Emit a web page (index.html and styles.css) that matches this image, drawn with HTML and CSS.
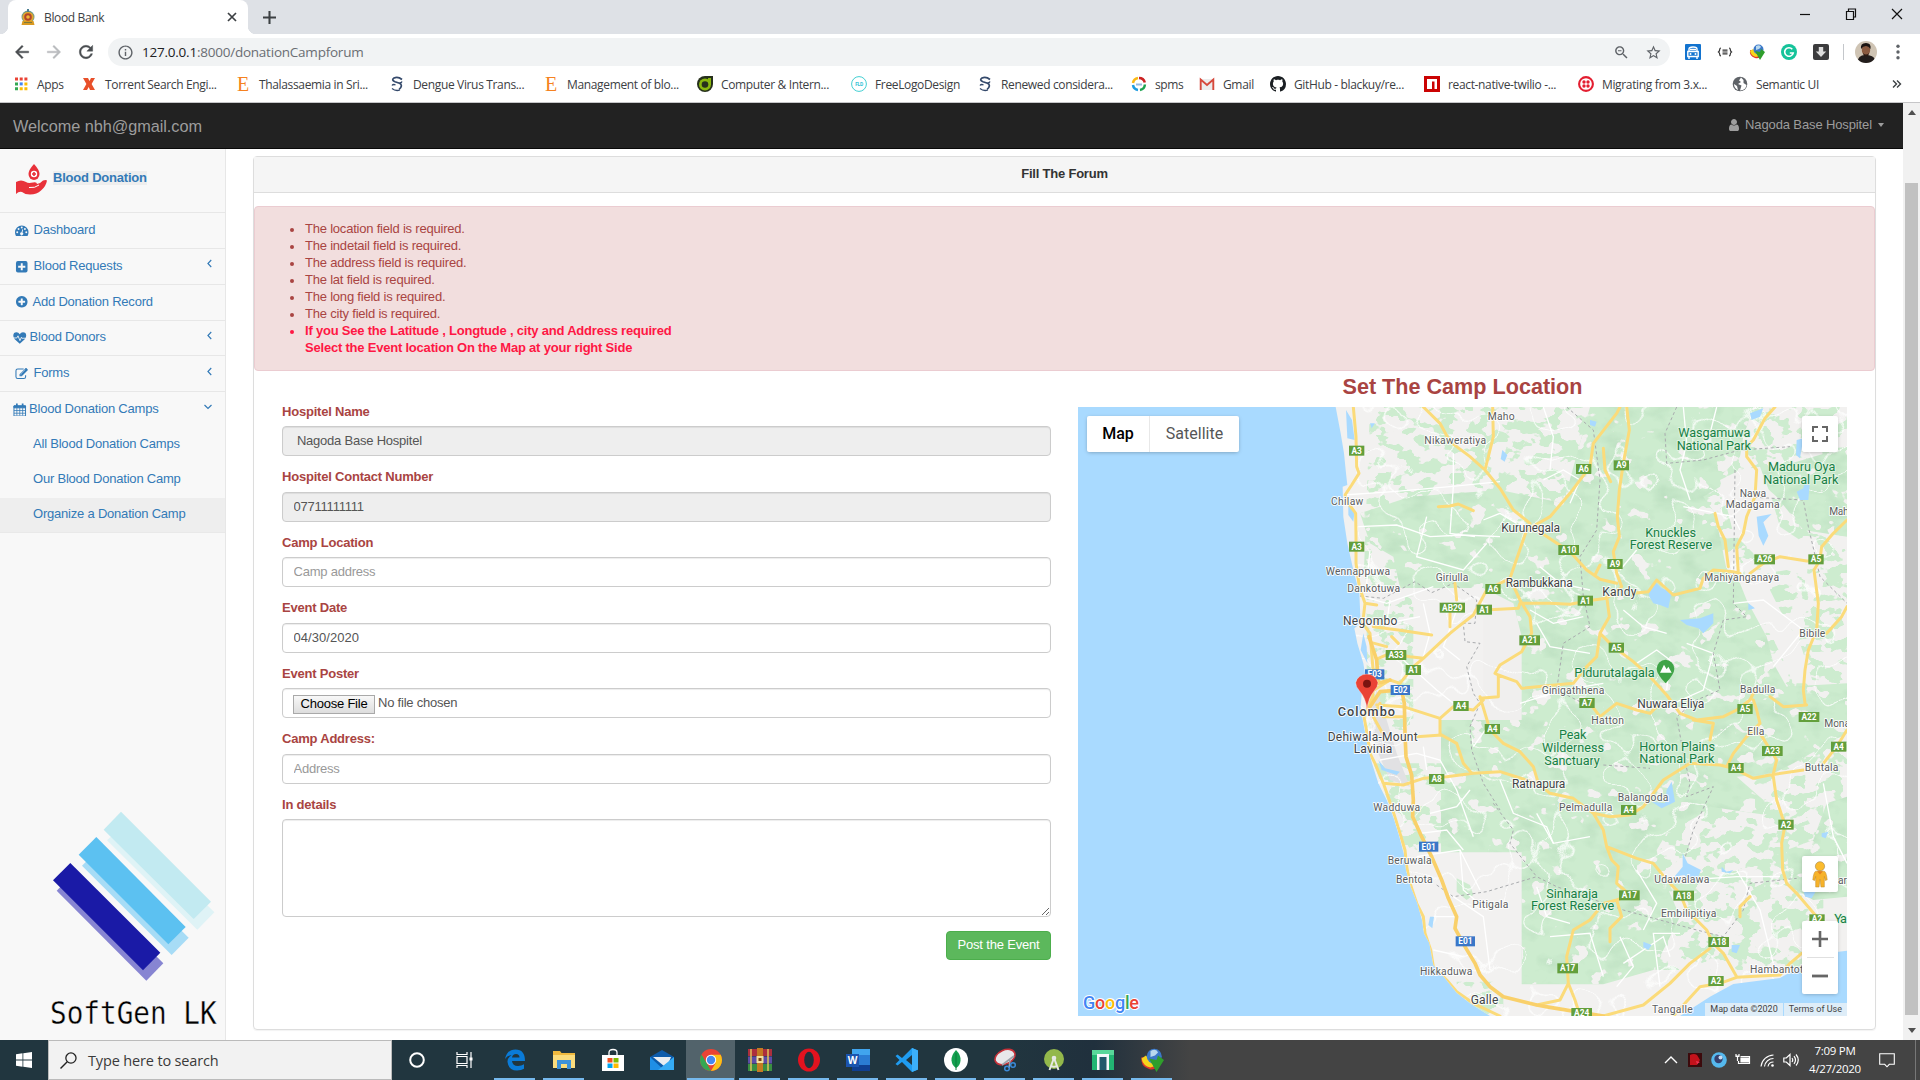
FILE: index.html
```html
<!DOCTYPE html>
<html lang="en">
<head>
<meta charset="utf-8">
<title>Blood Bank</title>
<link rel="stylesheet" href="styles.css">
</head>
<body>

<header class="tabstrip">
  <div class="tab">
    <svg class="i16" viewBox="0 0 16 16"><circle cx="8" cy="8" r="6.500" fill="#6f9a8d"/><circle cx="8" cy="8.300" r="5.600" fill="#e2a72e"/><circle cx="8" cy="8" r="3.800" fill="#b3462b"/><circle cx="8" cy="8" r="1.800" fill="#f0b638"/><path d="M7 0h2v3H7z" fill="#4c7f93"/><path d="M2.500 12h11l1 4h-13z" fill="#d99a22"/><path d="M4 13.500h8" stroke="#7d7a3a"/></svg>
    <span class="tab-title">Blood Bank</span>
    <svg class="tab-close" viewBox="0 0 10 10"><path d="M1 1l8 8M9 1l-8 8" stroke="#3c4043" stroke-width="1.700"/></svg>
  </div>
  <svg class="newtab" viewBox="0 0 12 12"><path d="M6 0v12M0 6h12" stroke="#3c4043" stroke-width="1.900"/></svg>
  <div class="winbtns">
    <svg viewBox="0 0 12 12"><path d="M1 6.500h10" stroke="#111" stroke-width="1.200"/></svg>
    <svg viewBox="0 0 12 12"><path d="M1.500 3.500h7v8h-7zM3.500 3.500v-2.500h7v8H8.500" fill="none" stroke="#111" stroke-width="1.200"/></svg>
    <svg viewBox="0 0 12 12"><path d="M1 1l10 10M11 1L1 11" stroke="#111" stroke-width="1.200"/></svg>
  </div>
</header>

<div class="toolbar">
  <svg class="nav" viewBox="0 0 24 24" fill="#4a4d51"><path d="M20 11H7.830l5.590-5.590L12 4l-8 8 8 8 1.410-1.410L7.830 13H20v-2z" stroke="#4a4d51" stroke-width=".5"/></svg>
  <svg class="nav" viewBox="0 0 24 24" fill="#b9bbbe"><path d="M12 4l-1.410 1.410L16.170 11H4v2h12.170l-5.580 5.590L12 20l8-8z" stroke="#b9bbbe" stroke-width=".5"/></svg>
  <svg class="nav" viewBox="0 0 24 24" fill="#4a4d51"><path d="M17.650 6.350C16.200 4.900 14.210 4 12 4c-4.420 0-7.990 3.580-7.990 8s3.570 8 7.990 8c3.730 0 6.840-2.550 7.730-6h-2.080c-.82 2.330-3.040 4-5.650 4-3.310 0-6-2.690-6-6s2.690-6 6-6c1.660 0 3.140.69 4.220 1.780L13 11h7V4l-2.350 2.350z" stroke="#4a4d51" stroke-width=".5"/></svg>
  <div class="omnibox">
    <svg class="i18" viewBox="0 0 24 24" fill="#5f6368"><path d="M11 7h2v2h-2zm0 4h2v6h-2zm1-9C6.480 2 2 6.480 2 12s4.480 10 10 10 10-4.480 10-10S17.520 2 12 2zm0 18c-4.410 0-8-3.590-8-8s3.590-8 8-8 8 3.590 8 8-3.590 8-8 8z"/></svg>
    <span class="url">127.0.0.1<span class="dim">:8000/donationCampforum</span></span>
    <svg class="i18" viewBox="0 0 24 24" fill="#5f6368"><path d="M15.500 14h-.79l-.28-.27C15.410 12.590 16 11.110 16 9.500 16 5.910 13.090 3 9.500 3S3 5.910 3 9.500 5.910 16 9.500 16c1.610 0 3.090-.59 4.230-1.570l.27.28v.79l5 4.990L20.490 19l-4.990-5zm-6 0C7.010 14 5 11.990 5 9.500S7.010 5 9.500 5 14 7.010 14 9.500 11.990 14 9.500 14zM7 8.800h5v1.400H7z"/></svg>
    <svg class="i18 star" viewBox="0 0 24 24" fill="#5f6368"><path d="M22 9.240l-7.190-.62L12 2 9.190 8.630 2 9.240l5.460 4.730L5.820 21 12 17.270 18.180 21l-1.630-7.030L22 9.240zM12 15.400l-3.760 2.270 1-4.280-3.320-2.880 4.380-.38L12 6.100l1.710 4.040 4.380.38-3.320 2.880 1 4.280L12 15.400z"/></svg>
  </div>
  <div class="extensions">
    <svg class="i16" viewBox="0 0 16 16"><rect width="16" height="16" rx="1" fill="#1273cf"/><path d="M4 7V5q0-2 4-2t4 2v2M2.800 7.500h10.400v5H2.800z" fill="none" stroke="#fff" stroke-width="1.400"/><circle cx="5.500" cy="10" r="1" fill="#fff"/><circle cx="10.500" cy="10" r="1" fill="#fff"/><path d="M4 13v2M12 13v2M5 5.500h6" stroke="#fff" stroke-width="1.400"/></svg>
    <svg class="i16" viewBox="0 0 16 16"><path d="M4 4Q2.700 4 2.700 5.500T1.500 8q1.200.7 1.200 2.300T4 12M12 4q1.300 0 1.300 1.500T14.500 8q-1.200.7-1.200 2.300T12 12M5.500 6.200h5M5.500 8h5M5.500 9.800h5" fill="none" stroke="#333" stroke-width="1.200"/></svg>
    <svg class="i16" viewBox="0 0 16 16"><use href="#idm"/></svg>
    <svg class="i16" viewBox="0 0 16 16"><circle cx="8" cy="8" r="8" fill="#15c39a"/><path d="M11.300 5.200A4.300 4.300 0 1 0 12.200 9H8.800" fill="none" stroke="#fff" stroke-width="1.600"/></svg>
    <svg class="i16" viewBox="0 0 16 16"><rect width="16" height="16" rx="2" fill="#3b3b3d"/><path d="M5.800 3h4.400v4.500h3L8 13 2.800 7.500h3z" fill="#ddd"/></svg>
  </div>
  <i class="sep"></i>
  <svg class="avatar" viewBox="0 0 22 22"><clipPath id="av"><circle cx="11" cy="11" r="11"/></clipPath><g clip-path="url(#av)"><path d="M0 0h22v22H0z" fill="#cfc4b4"/><path d="M2 22q1-8 8-8 9 0 10 5v3z" fill="#221d1c"/><ellipse cx="11" cy="9" rx="4.200" ry="5.500" fill="#8a5a40"/><path d="M6 8q-1-6 5-6 5.500 0 4.500 6-2-3-4.500-3-3 0-5 3z" fill="#1b1412"/><path d="M8 12q3 3 6 0l-1 3q-2 1-4 0z" fill="#2a1a14"/></g></svg>
  <svg class="dots" viewBox="0 0 4 16"><circle cx="2" cy="2.300" r="1.700"/><circle cx="2" cy="8" r="1.700"/><circle cx="2" cy="13.700" r="1.700"/></svg>
</div>

<nav class="bookmarks">
  <a><svg class="i16" viewBox="0 0 16 16"><path d="M2 1.500h3v3H2zM6.700 1.500h3v3h-3zM11.400 1.500h3v3h-3z" fill="#ea4335"/><path d="M2 6.400h3v3H2zM2 11.300h3v3H2z" fill="#34a853"/><path d="M6.700 6.400h3v3h-3z" fill="#4285f4"/><path d="M11.400 6.400h3v3h-3zM6.700 11.300h3v3h-3zM11.400 11.300h3v3h-3z" fill="#fbbc05"/></svg><span>Apps</span></a>
  <a><svg class="i16" viewBox="0 0 16 16"><path d="M2 2h5l1.500 3L10 2h4l-3.400 6L14 14H9l-1.300-3L6 14H2l3.400-6z" fill="#e8502a"/></svg><span>Torrent Search Engi...</span></a>
  <a><svg class="i16" viewBox="0 0 16 16"><use href="#ebook"/></svg><span>Thalassaemia in Sri...</span></a>
  <a><svg class="i16" viewBox="0 0 16 16"><use href="#sbook"/></svg><span>Dengue Virus Trans...</span></a>
  <a><svg class="i16" viewBox="0 0 16 16"><use href="#ebook"/></svg><span>Management of blo...</span></a>
  <a><svg class="i16" viewBox="0 0 16 16"><path d="M8 0h8v8a8 8 0 1 1-8-8z" fill="#26301c"/><circle cx="8" cy="8.500" r="6" fill="#8ab80f"/><path d="M11 2h3v7h-3z" fill="#8ab80f"/><circle cx="8" cy="8.500" r="3.300" fill="#26301c"/></svg><span>Computer &amp; Intern...</span></a>
  <a><svg class="i16" viewBox="0 0 16 16"><circle cx="8" cy="8" r="7.400" fill="#fff" stroke="#42cfd2"/><text x="8" y="10" font-size="5" font-weight="700" text-anchor="middle" fill="#35c3d6" font-family="Roboto, sans-serif">FLD</text></svg><span>FreeLogoDesign</span></a>
  <a><svg class="i16" viewBox="0 0 16 16"><use href="#sbook"/></svg><span>Renewed considera...</span></a>
  <a><svg class="i16" viewBox="0 0 16 16" fill="none" stroke-width="2.500"><path d="M8 2a6 6 0 0 1 5.800 4.500" stroke="#c22"/><path d="M13.900 8.500A6 6 0 0 1 9 14" stroke="#1ca351"/><path d="M7 14a6 6 0 0 1-5-5" stroke="#1d9be0"/><path d="M2 7a6 6 0 0 1 5-5" stroke="#fbb914"/><path d="M5 8.500h6" stroke="#9bbbe0" stroke-width="2"/></svg><span>spms</span></a>
  <a><svg class="i16" viewBox="0 0 16 16"><path d="M1 3h14v11H1z" fill="#ececec"/><path d="M1.700 14V3.500L8 9l6.300-5.500V14" fill="none" stroke="#d6493c" stroke-width="1.900"/></svg><span>Gmail</span></a>
  <a><svg class="i16" viewBox="0 0 16 16"><path fill="#1b1f23" d="M8 0C3.580 0 0 3.580 0 8c0 3.540 2.290 6.530 5.470 7.590.4.070.55-.17.55-.38 0-.19-.01-.82-.01-1.490-2.010.37-2.530-.49-2.690-.94-.09-.23-.48-.94-.82-1.130-.28-.15-.68-.52-.01-.53.63-.01 1.080.58 1.230.82.72 1.210 1.870.87 2.330.66.07-.52.28-.87.51-1.070-1.780-.2-3.640-.89-3.640-3.950 0-.87.31-1.590.82-2.150-.08-.2-.36-1.020.08-2.120 0 0 .67-.21 2.200.82.64-.18 1.320-.27 2-.27s1.360.09 2 .27c1.530-1.040 2.200-.82 2.200-.82.44 1.100.16 1.920.08 2.120.51.56.82 1.270.82 2.150 0 3.070-1.870 3.750-3.650 3.950.29.25.54.73.54 1.480 0 1.070-.01 1.930-.01 2.200 0 .21.15.46.55.38A8.010 8.010 0 0016 8c0-4.420-3.580-8-8-8z"/></svg><span>GitHub - blackuy/re...</span></a>
  <a><svg class="i16" viewBox="0 0 16 16"><path d="M0 0h16v16H0z" fill="#cb0303"/><path d="M3 3h10v10h-2.500V5.500H8V13H3z" fill="#fff"/></svg><span>react-native-twilio -...</span></a>
  <a><svg class="i16" viewBox="0 0 16 16"><circle cx="8" cy="8" r="6.900" fill="#fff" stroke="#e31e30" stroke-width="2.100"/><g fill="#e31e30"><circle cx="6" cy="6" r="1.700"/><circle cx="10" cy="6" r="1.700"/><circle cx="6" cy="10" r="1.700"/><circle cx="10" cy="10" r="1.700"/></g></svg><span>Migrating from 3.x...</span></a>
  <a><svg class="i16" viewBox="0 0 16 16"><circle cx="8" cy="8" r="7.300" fill="#5f6368"/><path d="M9 1.500L7 4.500l2 1.500-3 2 3.500 1.500L8 14.500q6-.5 6.500-5.500l-3-2V4zM2 8l3 2 1 4q-4-2-4-6z" fill="#fff"/></svg><span>Semantic UI</span></a>
  <svg class="more" viewBox="0 0 10 8"><path d="M1 .5L4.500 4 1 7.500M5 .5L8.500 4 5 7.500" fill="none" stroke="#3c4043" stroke-width="1.400"/></svg>
</nav>

<div class="viewport">
  <div class="page">
    <div class="navbar">
      <span class="welcome">Welcome nbh@gmail.com</span>
      <span class="account"><svg viewBox="0 0 1792 1792" fill="#9d9d9d"><path d="M1536 1399q0 109-62.500 187t-150.500 78h-854q-88 0-150.500-78t-62.500-187q0-85 8.500-160.500t31.500-152 58.500-131 94-89 134.500-34.500q131 128 313 128t313-128q76 0 134.500 34.500t94 89 58.500 131 31.500 152 8.500 160.500zm-256-887q0 159-112.500 271.500t-271.500 112.500-271.500-112.500-112.500-271.500 112.500-271.500 271.500-112.500 271.500 112.500 112.500 271.500z"/></svg>Nagoda Base Hospitel<i class="caret"></i></span>
    </div>
    <div class="columns">
      <aside class="sidebar">
        <div class="brand">
          <svg viewBox="0 0 32 32"><path d="M19 0q5.500 6 5.500 10a5.500 6 0 0 1-11 0Q13.500 6 19 0z" fill="#e8313a"/><circle cx="19" cy="10" r="3.200" fill="#fff"/><path d="M18.200 8h1.600v4h-1.600zM17 9.200h4v1.600h-4z" fill="#e8313a"/><path d="M1 18q5-3 10 0 2 1.500 7 .5 4-.8 4 1.500 4-1 6-3.500 3-1 4 0-1 6-6 10-4 4-11 4-5 0-8-2.500-3-1-6 2z" fill="#e8313a"/><path d="M14 23.500q6 .8 10-2.500" stroke="#fff" fill="none"/></svg>
          <span>Blood Donation</span>
        </div>
        <a class="item"><svg class="fa" viewBox="0 0 14 14"><path d="M7 1.500a7 7 0 0 0-7 7q0 2.200 1 4h12q1-1.800 1-4a7 7 0 0 0-7-7z" fill="#337ab7"/><g fill="#f8f8f8"><circle cx="2.300" cy="8.500" r="1"/><circle cx="3.700" cy="5.200" r="1"/><circle cx="7" cy="3.600" r="1"/><circle cx="10.300" cy="5.200" r="1"/><circle cx="11.700" cy="8.500" r="1"/><path d="M7.600 5.500l.8.200-.6 3a1.600 1.600 0 1 1-1-.2z"/></g></svg><span>Dashboard</span></a>
        <a class="item"><svg class="fa" viewBox="0 0 14 14"><path d="M3 1h8q2 0 2 2v8q0 2-2 2H3q-2 0-2-2V3q0-2 2-2z" fill="#337ab7"/><path d="M6 3.300h2V6h2.700v2H8v2.700H6V8H3.300V6H6z" fill="#f8f8f8"/></svg><span>Blood Requests</span><svg class="arrow" viewBox="0 0 8 10"><path d="M6 1L2.200 5 6 9" fill="none" stroke="#337ab7" stroke-width="1.300"/></svg></a>
        <a class="item item-add"><svg class="fa" viewBox="0 0 1792 1792" fill="#337ab7"><path d="M1344 960v-128q0-26-19-45t-45-19h-256v-256q0-26-19-45t-45-19h-128q-26 0-45 19t-19 45v256h-256q-26 0-45 19t-19 45v128q0 26 19 45t45 19h256v256q0 26 19 45t45 19h128q26 0 45-19t19-45v-256h256q26 0 45-19t19-45zm320-64q0 209-103 385.500t-279.500 279.500-385.500 103-385.500-103-279.500-279.500-103-385.500 103-385.500 279.500-279.500 385.500-103 385.500 103 279.500 279.500 103 385.500z"/></svg><span>Add Donation Record</span></a>
        <a class="item item-donors"><svg class="fa" viewBox="0 0 14 14"><path d="M7 3.400Q5.800 1.400 3.700 1.400.3 1.400.3 5q0 2 1.500 3.500L7 13.300l5.200-4.800Q13.700 7 13.700 5q0-3.600-3.400-3.600Q8.200 1.400 7 3.400z" fill="#337ab7"/><path d="M0 7.200h4L5.200 5l2 5 1.500-3.500.5 1H14" fill="none" stroke="#f8f8f8" stroke-width=".9"/></svg><span>Blood Donors</span><svg class="arrow" viewBox="0 0 8 10"><path d="M6 1L2.200 5 6 9" fill="none" stroke="#337ab7" stroke-width="1.300"/></svg></a>
        <a class="item"><svg class="fa" viewBox="0 0 14 14"><path d="M9 2H2.800Q1 2 1 3.800v6.400Q1 12 2.800 12h6.400Q11 12 11 10.200V8.500" fill="none" stroke="#337ab7" stroke-width="1.100"/><path d="M4.700 9.700V7.400l6.300-6.300q.4-.3.800 0l1.400 1.400q.4.400 0 .8L7 9.700z" fill="#337ab7"/><path d="M5.600 7.500l5-5M6 8.800l.6-.5" stroke="#f8f8f8" stroke-width=".6"/></svg><span>Forms</span><svg class="arrow" viewBox="0 0 8 10"><path d="M6 1L2.200 5 6 9" fill="none" stroke="#337ab7" stroke-width="1.300"/></svg></a>
        <a class="item item-camps"><svg class="fa" viewBox="0 0 14 14" fill="none" stroke="#337ab7"><path d="M1 3h12v10.500H1z"/><path d="M1 3h12v2H1z" fill="#337ab7"/><path d="M4 .5v3M10 .5v3" stroke-width="1.800"/><path d="M4 5v8M7 5v8M10 5v8M1 7.800h12M1 10.600h12" stroke-width=".8"/></svg><span>Blood Donation Camps</span><svg class="arrow down" viewBox="0 0 10 8"><path d="M1.500 2l3.500 3.500L8.500 2" fill="none" stroke="#337ab7" stroke-width="1.200"/></svg></a>
        <a class="sub">All Blood Donation Camps</a>
        <a class="sub">Our Blood Donation Camp</a>
        <a class="sub active">Organize a Donation Camp</a>
        <svg class="softgen" viewBox="150 90 510 660">
          <path d="M332 171L373 129 643 397 592 449 321 181z" fill="#dff3f6"/>
          <path d="M363 95L633 365 581 417 311 149z" fill="#c2eaf1"/>
          <path d="M246 257l50-50 270 266-51 52z" fill="#a7dcf6"/>
          <path d="M289 171l268 270-52 52-269-269z" fill="#5cc1f1"/>
          <path d="M170 332l50-50 270 268-51 52z" fill="#8785d2"/>
          <path d="M211 249l270 269-52 53-270-270z" fill="#1a1aa6"/>
          <text x="150" y="732" textLength="500" lengthAdjust="spacingAndGlyphs" class="softgen-name">SoftGen LK</text>
        </svg>
      </aside>

      <main class="main">
        <section class="panel">
          <h2 class="panel-heading">Fill The Forum</h2>
          <div class="alert">
            <ul>
              <li>The location field is required.</li>
              <li>The indetail field is required.</li>
              <li>The address field is required.</li>
              <li>The lat field is required.</li>
              <li>The long field is required.</li>
              <li>The city field is required.</li>
              <li class="hot">If you See the Latitude , Longtude , city and Address required<br>Select the Event location On the Map at your right Side</li>
            </ul>
          </div>
          <div class="panel-body">
            <form class="form">
              <label>Hospitel Name</label>
              <input class="control" type="text" value=" Nagoda Base Hospitel" readonly>
              <label>Hospitel Contact Number</label>
              <input class="control" type="text" value="07711111111" readonly>
              <label>Camp Location</label>
              <input class="control" type="text" placeholder="Camp address">
              <label>Event Date</label>
              <input class="control date" type="text" value="04/30/2020">
              <label>Event Poster</label>
              <div class="control file"><span class="choose">Choose File</span><span class="nofile">No file chosen</span></div>
              <label>Camp Address:</label>
              <input class="control" type="text" placeholder="Address">
              <label>In details</label>
              <textarea class="control"></textarea>
              <button class="submit" type="button">Post the Event</button>
            </form>
            <div class="location">
              <h3>Set The Camp Location</h3>
              <div class="map">
                <svg class="tiles" viewBox="24 111 2307 1827">
                  <defs>
                    <filter id="patch" x="0" y="0" width="1" height="1" color-interpolation-filters="sRGB"><feTurbulence type="fractalNoise" baseFrequency=".019 .026" numOctaves="3" seed="8"/><feColorMatrix values="0 0 0 0 .805 0 0 0 0 .925 0 0 0 0 .812 30 0 0 0 -15.400"/></filter>
                    <filter id="bare" x="0" y="0" width="1" height="1" color-interpolation-filters="sRGB"><feTurbulence type="fractalNoise" baseFrequency=".016 .02" numOctaves="3" seed="21"/><feColorMatrix values="0 0 0 0 .95 0 0 0 0 .945 0 0 0 0 .94 30 0 0 0 -19.600"/></filter>
                    <filter id="lanes" x="0" y="0" width="1" height="1" color-interpolation-filters="sRGB"><feTurbulence type="fractalNoise" baseFrequency=".008" numOctaves="2" seed="5"/><feColorMatrix values="0 0 0 0 1 0 0 0 0 1 0 0 0 0 1 1 0 0 0 0"/><feComponentTransfer><feFuncA type="table" tableValues="0 0 0 0 0 0 0 0 0 0 0 0 0 0 0 0 0 0 0 0 0 0 0 0 0 0 .8 0 0 0 0 0 0 0 0 0 0 0 0 0 0 0 0 0 0 0 0 0 0 0 0 0 0 0 0 0 0 0 0 0"/></feComponentTransfer></filter>
                    <filter id="relief" x="0" y="0" width="1" height="1" color-interpolation-filters="sRGB"><feTurbulence type="fractalNoise" baseFrequency=".012 .02" numOctaves="3" seed="3"/><feColorMatrix values="0 0 0 0 .5 0 0 0 0 .7 0 0 0 0 .55 2 0 0 0 -.95"/></filter>
                    <path id="land" d="M797 111L812 190 822 250 828 310 832 345 818 350 820 440 832 520 850 600 868 670 872 760 853 775 862 820 880 880 888 930 876 960 872 1010 880 1060 893 1130 906 1180 925 1240 950 1290 970 1340 988 1400 1001 1450 1008 1500 1022 1550 1042 1600 1056 1650 1062 1690 1078 1720 1090 1785 1125 1825 1160 1868 1200 1900 1240 1925 1260 1938H1830L1920 1880 1990 1842 2130 1824 2190 1790 2270 1750 2331 1742V111z"/>
                    <path id="forest" d="M1560 111H2050L2020 200 2010 260 1960 310 1950 350 1900 380 1935 430 1970 600 2010 640 2030 690 2090 800 2110 880 2150 950 2331 940V1090L2170 1180 2110 1210 2000 1220 2080 1290 2090 1335 1920 1310 1880 1340 1790 1390 1760 1440 1770 1500 1830 1640 1800 1700 1750 1800 1600 1843H1355V1447H1113V1050H1355V800L1330 700 1240 654H990L970 560 900 520 870 430 1020 380 1290 360 1480 400z M2150 1440L2230 1410 2270 1300 2331 1280V1580L2230 1590 2160 1550z M2040 310L2130 290 2331 230V500L2200 480 2120 380z"/>
                    <clipPath id="landclip"><use href="#land"/></clipPath>
                    <clipPath id="forestclip"><use href="#forest"/></clipPath>
                    <clipPath id="patchclip"><path d="M900 111h1431v540H880zM890 680h140v400H890zM910 1180h203v267h-100zM1700 1300h560v500h-600zM2100 600h231v700h-300zM1160 1835h140v103h-140z"/></clipPath>
                    <g id="a2"><rect x="-23" y="-15" width="46" height="30" fill="#639f3c"/></g>
                    <g id="a3"><rect x="-31" y="-15" width="62" height="30" fill="#639f3c"/></g>
                    <g id="ee"><rect x="-29" y="-15" width="58" height="30" fill="#3a77c8"/></g>
                  </defs>
                  <path d="M24 111h2307v1827H24z" fill="#a9daff"/>
                  <use href="#land" fill="#f2f1f0"/>
                  <g clip-path="url(#landclip)">
                    <g clip-path="url(#patchclip)"><path d="M860 111h1471v1827H860z" filter="url(#patch)"/></g>
                    <path d="M1270 640h85v160h-85zM1240 654h115v396h-115z" fill="#f0efee"/>
                    <use href="#forest" fill="#cdeccf"/>
                    <g clip-path="url(#forestclip)">
                      <path d="M860 111h1471v1827H860z" filter="url(#relief)" opacity=".22"/>
                      <path d="M860 111h1471v1827H860z" filter="url(#bare)"/>
                    </g>
                    <path d="M2010 620l60 100 60 130 40 90h60l-40-120-60-100-50-100zM1950 330l60-30 60-10 30 80 30 100 90 60-10 90-60-20-60 10-40-60-60-60z" fill="#f2f1f0"/>
                    <path d="M920 960l30 90 30 100 40 100-60-20-40-90-20-100z" fill="#e1e1e3"/>
                    <path d="M1160 1525l40 20 10 30-20 15-30-25z" fill="#cdeccf"/>
                    <path d="M880 111h1451v1827H860z" filter="url(#lanes)"/>
                    <g fill="none" stroke="#fff" stroke-width="4">
                      <path d="M820 375L970 365 1140 350 1290 335M865 470L980 465 1080 500 1180 495 1290 500M1150 250V350L1140 490 1215 500M1070 440L1040 560 1180 600 1250 520M880 680L950 700 1090 650M930 1170L1040 1150 1110 1170 1160 1260 1210 1400M1110 1050V1095M1040 1460L1170 1440 1230 1560M1120 1560L1240 1640 1260 1800M1400 1330L1450 1420 1560 1400M1440 1700L1560 1690 1600 1820M1660 1780L1780 1700 1800 1760M1770 1850L1750 1690 1830 1690M2000 1500L2070 1620 2110 1780M1850 1530L2000 1520 2130 1520M2260 1240L2290 1400 2331 1480M1810 1000L1900 960 1930 850 1850 820M1990 700L2080 690 2200 780 2110 890M1350 1000L1480 960 1600 940M1700 540L1650 600M1840 410L1990 440 2010 480"/>
                      <path d="M900 540L890 640M960 690L950 760 1050 740M1060 700L1080 790 1060 860M1000 870L1100 960 1150 1000M1160 720L1120 830 1170 870M1060 1130L1070 1200M1080 1330L1160 1310 1200 1260M1050 1390L1130 1380 1180 1440M1170 1440L1180 1560 1250 1620M1090 1640L1160 1640M1090 1740L1180 1760M1260 1060L1210 1130M1290 1230L1330 1330 1430 1370 1450 1420M1380 720L1450 760 1540 740M1400 760L1440 830 1560 850M1700 880L1760 840 1800 870 1790 960M1660 720L1720 770 1790 790M1410 590L1470 640 1560 660M1420 330L1480 300 1530 330 1500 400M1420 111L1450 200 1440 300M1840 111L1850 220 1830 300 1860 390M1940 111L1920 190 1850 200M1240 450L1290 430 1340 460M1400 1550L1430 1640 1500 1660M1650 1700L1690 1790 1640 1850M1700 1500L1760 1600 1720 1680"/>
                    </g>
                    <g fill="none" stroke="#a8aaad" stroke-width="3" stroke-dasharray="9 8">
                      <path d="M870 678L940 685 1035 635 1085 668 1150 640 1220 690 1215 760 1180 760 1185 815 1230 820 1190 890 1210 970 1230 1000 1200 1070 1205 1140 1240 1240 1290 1320M1490 111L1570 180 1590 330 1580 480 1530 560 1540 680 1560 770 1480 820 1460 960 1540 1000M1820 111L1785 190 1790 280 1900 270 2010 240 2160 230M1995 300L1990 700 2030 740 1960 750 1930 850 1950 960 1880 990 1820 1040 1840 1150 1860 1240 1850 1280 1930 1250 1870 1380 1840 1480M2020 380L2200 390 2215 470 2250 620 2331 700M1600 1185L1740 1195M1100 1545L1150 1580 1250 1565 1400 1520 1460 1550 1660 1620 1880 1680 1960 1700 2020 1620 2040 1540 2180 1525 M1270 1300L1330 1380 1320 1420 1400 1520"/>
                    </g>
                    <g fill="#a9daff">
                      <path d="M828 120l18 30 8 60-22-5zM1297 240l15 15-8 20-12-8zM1560 150l20 5-5 15-15-5zM2040 130l40-15-10 25-25 10zM2180 210l20-5-10 60-12-10zM2205 330l15 0-5 60-25 0-10-25 20-10zM2060 440l45-8-25 25 15 40-15 30-14-30zM1735 660l20-25 20 20 30 10-10 50-25-10-20-5-12-20zM1830 750l60-5 40-15 0 30-30 30-15-15-35-10zM1790 1260l15-25 10 60-40 20-30-20 40 5zM1838 1450l15 30 40 20-15 35-20-5-15-15-30 5 25-30zM1955 1490l15 15 20-5-10 10-25-5zM2255 1390l20-5-8 20-12-5zM1080 1640l12 0-5 35-12-10zM925 1170l20 25 45 10-10 10-45-15zM1720 1715l25 10-10 15-15-8zM1985 1725l25 0-10 25-15-5zM835 405l18 25-3 25-15-20zM880 790l10 40 2 50-20-40zM2035 700l20 15-20 5zM900 160l15 0-10 15zM2200 1560l40 0-15 25-20-5z"/>
                    </g>
                    <g fill="none" stroke-linejoin="round" stroke-linecap="round">
                      <path class="road" d="M850 111L858 200 860 290 867 310 845 345 825 375 835 400 857 430 858 500 858 580 868 650 885 700 878 760 900 790 905 850 912 930 908 980 882 1040 893 1100 900 1150 915 1180 940 1240 965 1310 990 1390 1005 1440 1010 1490 1020 1540 1040 1600 1060 1640 1065 1690 1082 1740 1090 1790 1130 1830 1160 1865 1210 1900 1290 1938M1060 111L1110 160 1140 215 1200 260 1245 300 1290 355 1330 420 1380 460M1268 111L1270 200 1245 300M1105 410L1140 408 1165 402 1210 422M885 700L920 705M925 865L960 850 1020 860 1060 865M910 770L985 780 1085 795M905 818L950 830M965 800L985 820M912 960L960 930 990 940 1030 890 1060 865 1140 790 1165 770 1210 735 1250 660 1320 625 1370 480 1440 440 1500 370 1560 290 1570 220 1640 130 1650 111M1155 640L1160 690M1140 730L1140 770M1245 720L1345 715 1350 700 1440 700 1500 703 1570 690 1610 685 1650 655M1320 625L1350 690M1400 480L1500 545 1550 600 1590 628 1640 640M1670 111L1678 180 1660 280 1648 360 1642 440 1648 500 1630 545 1640 610 1655 650M1600 235L1605 300 1622 335M1590 585L1575 615M1690 670L1735 665 1760 630 1810 675 1890 655 1900 625 1930 600 1990 605 2010 610M1935 430L1945 470 1965 510 1975 590M2115 111L2085 145 2050 210 2030 230 2030 260 2060 300 2055 380 2030 440 2020 490 2000 530 2005 610M2040 610L2080 580 2130 560 2210 573 2240 573M2331 450L2290 490 2255 530 2250 570 2232 600 2245 700 2240 780 2215 840 2205 900 2200 960 2205 1000M2331 710L2315 740 2270 790M1610 680L1618 740 1590 790 1630 830 1690 875 1740 920 1790 975 1830 1030 1880 1050 1960 1040 2000 1020 2040 990 2055 960M1590 790L1580 860 1550 890 1510 940 1355 955 1340 935 1285 915 1285 980 1230 985M1350 690L1380 740 1385 790 1355 845 1290 885 1275 910 1285 915M1560 1000L1590 1040 1640 1000 1700 1020 1740 1030 1760 1010M1230 980L1260 1080 1300 1120 1350 1145 1390 1190 1405 1240 1440 1270 1510 1285 1570 1330 1620 1340 1680 1335 1720 1310 1780 1230 1860 1180 1950 1185 1990 1195 2050 1225 2100 1215 2200 1200M920 1005L1000 1010 1110 1045 1150 1010 1210 1020 1240 990M940 1040L1000 1040M1040 1100L1115 1095 1160 1120 1180 1180 1205 1210M1110 1045V1095M940 1240L1000 1245 1060 1225 1130 1220 1210 1210 1290 1205 1400 1240M1570 1330L1600 1380 1610 1430 1700 1465 1750 1480 1790 1530 1830 1570 1850 1620 1910 1680 1930 1720 1960 1750 2000 1820M1610 1430L1625 1470 1645 1490 1640 1540 1680 1575 1640 1590 1600 1600 1560 1650 1510 1680 1490 1760 1495 1840 1515 1890 1530 1938M1640 1590L1655 1640 1620 1675 1620 1715M2110 1220L2120 1290 2145 1365 2135 1420 2138 1500 2150 1540 2180 1570 2240 1640M1810 1938L1890 1850 1950 1840 2000 1822 2130 1815 2160 1780 2195 1750M1400 1905L1470 1890 1495 1840M1600 1938L1720 1905 1800 1840 1860 1780 1920 1735M1970 1190L1990 1150 2030 1100 2070 1060 2060 1020 2050 990M2100 980L2140 1010 2210 1005M2070 1090L2120 1170 2108 1220M2331 1080L2300 1130 2260 1180M2040 1580L2010 1610 2010 1640M1870 1050L1930 1060 1920 1110M930 1000L910 1040 935 1085"/>
                      <path class="mway" d="M897 800L920 870 925 940 960 930M995 960L1003 1000 1005 1090 1008 1160 1025 1215 1030 1290 1028 1340 1055 1400 1085 1460 1115 1530 1135 1585 1160 1640 1155 1675 1185 1730 1215 1780 1230 1815 1260 1850 1300 1880 1400 1905 1440 1912 1600 1938M990 960L930 965 900 1010"/>
                    </g>
                  </g>
                  <g class="shield">
                    <g transform="translate(860 242)"><use href="#a2"/><text y="9">A3</text></g>
                    <g transform="translate(860 530)"><use href="#a2"/><text y="9">A3</text></g>
                    <g transform="translate(1269 657)"><use href="#a2"/><text y="9">A6</text></g>
                    <g transform="translate(1147 713)"><rect x="-38" y="-15" width="76" height="30" fill="#639f3c"/><text y="9">AB29</text></g>
                    <g transform="translate(1243 719)"><use href="#a2"/><text y="9">A1</text></g>
                    <g transform="translate(978 855)"><use href="#a3"/><text y="9">A33</text></g>
                    <g transform="translate(1030 900)"><use href="#a2"/><text y="9">A1</text></g>
                    <g transform="translate(914 913)"><use href="#ee"/><text y="9">E03</text></g>
                    <g transform="translate(991 960)"><use href="#ee"/><text y="9">E02</text></g>
                    <g transform="translate(1541 297)"><use href="#a2"/><text y="9">A6</text></g>
                    <g transform="translate(1654 286)"><use href="#a2"/><text y="9">A9</text></g>
                    <g transform="translate(1496 540)"><use href="#a3"/><text y="9">A10</text></g>
                    <g transform="translate(1635 582)"><use href="#a2"/><text y="9">A9</text></g>
                    <g transform="translate(1546 692)"><use href="#a2"/><text y="9">A1</text></g>
                    <g transform="translate(1379 811)"><use href="#a3"/><text y="9">A21</text></g>
                    <g transform="translate(1639 833)"><use href="#a2"/><text y="9">A5</text></g>
                    <g transform="translate(2084 568)"><use href="#a3"/><text y="9">A26</text></g>
                    <g transform="translate(2238 568)"><use href="#a2"/><text y="9">A5</text></g>
                    <g transform="translate(1551 999)"><use href="#a2"/><text y="9">A7</text></g>
                    <g transform="translate(2025 1017)"><use href="#a2"/><text y="9">A5</text></g>
                    <g transform="translate(2217 1041)"><use href="#a3"/><text y="9">A22</text></g>
                    <g transform="translate(2306 1130)"><use href="#a2"/><text y="9">A4</text></g>
                    <g transform="translate(2107 1143)"><use href="#a3"/><text y="9">A23</text></g>
                    <g transform="translate(1998 1194)"><use href="#a2"/><text y="9">A4</text></g>
                    <g transform="translate(1267 1077)"><use href="#a2"/><text y="9">A4</text></g>
                    <g transform="translate(1173 1008)"><use href="#a2"/><text y="9">A4</text></g>
                    <g transform="translate(1100 1227)"><use href="#a2"/><text y="9">A8</text></g>
                    <g transform="translate(1676 1320)"><use href="#a2"/><text y="9">A4</text></g>
                    <g transform="translate(2148 1364)"><use href="#a2"/><text y="9">A2</text></g>
                    <g transform="translate(1678 1576)"><use href="#a3"/><text y="9">A17</text></g>
                    <g transform="translate(1841 1577)"><use href="#a3"/><text y="9">A18</text></g>
                    <g transform="translate(1946 1716)"><use href="#a3"/><text y="9">A18</text></g>
                    <g transform="translate(1938 1833)"><use href="#a2"/><text y="9">A2</text></g>
                    <g transform="translate(1493 1795)"><use href="#a3"/><text y="9">A17</text></g>
                    <g transform="translate(1535 1929)"><use href="#a3"/><text y="9">A24</text></g>
                    <g transform="translate(2241 1648)"><use href="#a2"/><text y="9">A2</text></g>
                    <g transform="translate(1076 1430)"><use href="#ee"/><text y="9">E01</text></g>
                    <g transform="translate(1186 1714)"><use href="#ee"/><text y="9">E01</text></g>
                  </g>
                  <g class="town">
                    <text x="1253" y="150" textLength="81">Maho</text>
                    <text x="1063" y="222" textLength="185">Nikaweratiya</text>
                    <text x="783" y="405" textLength="97">Chilaw</text>
                    <text x="767" y="616" textLength="193">Wennappuwa</text>
                    <text x="832" y="667" textLength="158">Dankotuwa</text>
                    <text x="1097" y="632" textLength="98">Giriulla</text>
                    <text x="910" y="1323" textLength="140">Wadduwa</text>
                    <text x="953" y="1483" textLength="132">Beruwala</text>
                    <text x="978" y="1538" textLength="110">Bentota</text>
                    <text x="1207" y="1613" textLength="108">Pitigala</text>
                    <text x="1050" y="1815" textLength="157">Hikkaduwa</text>
                    <text x="1903" y="632" textLength="224">Mahiyanganaya</text>
                    <text x="2009" y="382" textLength="79">Nawa</text>
                    <text x="1967" y="414" textLength="162">Madagama</text>
                    <text x="2278" y="436" textLength="58">Mah</text>
                    <text x="2188" y="802" textLength="78">Bibile</text>
                    <text x="2010" y="970" textLength="106">Badulla</text>
                    <text x="1415" y="972" textLength="188">Ginigathhena</text>
                    <text x="1564" y="1062" textLength="98">Hatton</text>
                    <text x="2032" y="1095" textLength="51">Ella</text>
                    <text x="2263" y="1070" textLength="77">Mona</text>
                    <text x="2204" y="1202" textLength="101">Buttala</text>
                    <text x="1467" y="1324" textLength="160">Pelmadulla</text>
                    <text x="1643" y="1292" textLength="152">Balangoda</text>
                    <text x="1753" y="1538" textLength="165">Udawalawa</text>
                    <text x="1773" y="1641" textLength="166">Embilipitiya</text>
                    <text x="2040" y="1810" textLength="160">Hambantot</text>
                    <text x="1746" y="1929" textLength="122">Tangalle</text>
                    <text x="2304" y="1543" textLength="27">ar</text>
                  </g>
                  <g class="town city">
                    <text x="819" y="764" textLength="163">Negombo</text>
                    <text x="803" y="1038" textLength="172" class="capital">Colombo</text>
                    <text x="773" y="1112" textLength="270">Dehiwala-Mount</text>
                    <text x="851" y="1150" textLength="116">Lavinia</text>
                    <text x="1202" y="1902" textLength="83">Galle</text>
                    <text x="1294" y="485" textLength="176">Kurunegala</text>
                    <text x="1307" y="652" textLength="201">Rambukkana</text>
                    <text x="1597" y="677" textLength="102">Kandy</text>
                    <text x="1702" y="1015" textLength="201">Nuwara Eliya</text>
                    <text x="1326" y="1255" textLength="160">Ratnapura</text>
                  </g>
                  <g class="town park">
                    <text x="1825" y="200" textLength="216">Wasgamuwa</text>
                    <text x="1820" y="239" textLength="223">National Park</text>
                    <text x="2094" y="303" textLength="202">Maduru Oya</text>
                    <text x="2080" y="341" textLength="225">National Park</text>
                    <text x="1726" y="500" textLength="152">Knuckles</text>
                    <text x="1679" y="538" textLength="248">Forest Reserve</text>
                    <text x="1513" y="920" textLength="241">Pidurutalagala</text>
                    <text x="1467" y="1107" textLength="82">Peak</text>
                    <text x="1416" y="1146" textLength="186">Wilderness</text>
                    <text x="1423" y="1184" textLength="166">Sanctuary</text>
                    <text x="1708" y="1143" textLength="227">Horton Plains</text>
                    <text x="1708" y="1180" textLength="225">National Park</text>
                    <text x="1429" y="1584" textLength="155">Sinharaja</text>
                    <text x="1383" y="1621" textLength="250">Forest Reserve</text>
                    <text x="2293" y="1660" textLength="38">Ya</text>
                  </g>
                  <path d="M1787 940Q1760 912 1760 896a26 26 0 0 1 53 0q0 16-26 44z" fill="#3fa447"/><path d="M1770 908l12-24 8 14 5-8 10 18z" fill="#fff"/>
                  <path d="M891 1018Q888 985 868 962 857 950 857 938a34 31 0 0 1 67 0q0 12-11 24-19 23-22 56z" fill="#ea4335" stroke="#fff" stroke-opacity=".5" stroke-width="2"/><circle cx="891" cy="941" r="12" fill="#7b1410"/>
                </svg>
                <div class="maptype"><b>Map</b><span>Satellite</span></div>
                <div class="mapbtn fullscreen"><svg viewBox="0 0 16 16"><path d="M1 6V1h5M10 1h5v5M15 10v5h-5M6 15H1v-5" fill="none" stroke="#666" stroke-width="2"/></svg></div>
                <div class="mapbtn pegman"><svg viewBox="0 0 16 28"><circle cx="8" cy="5.500" r="4.800" fill="#fbbb2d" stroke="#9c8352" stroke-width=".6"/><path d="M4 10.500h8q2.500 0 3.500 9l-2 .8L12.500 16v11H9l-1-8-1 8H3.500V16l-1 4.300-2-.8q1-9 3.500-9z" fill="#f7b229" stroke="#b98a2f" stroke-width=".5"/><path d="M5 10.500h6L8 14z" fill="#e57f1e"/></svg></div>
                <div class="zoom"><svg viewBox="0 0 16 16"><path d="M8 0v16M0 8h16" stroke="#666" stroke-width="2.600"/></svg><i></i><svg viewBox="0 0 16 16"><path d="M0 8h16" stroke="#666" stroke-width="2.800"/></svg></div>
                <svg class="glogo" viewBox="0 0 60 22"><text x="1" y="15.500" textLength="56"><tspan fill="#4285f4">G</tspan><tspan fill="#ea4335">o</tspan><tspan fill="#fbbc05">o</tspan><tspan fill="#4285f4">g</tspan><tspan fill="#34a853">l</tspan><tspan fill="#ea4335">e</tspan></text></svg>
                <div class="credits"><span>Map data ©2020</span><span>Terms of Use</span></div>
              </div>
            </div>
          </div>
        </section>
      </main>
    </div>
  </div>
  <div class="scrollbar">
    <svg viewBox="0 0 8 5"><path d="M0 5l4-5 4 5z" fill="#505050"/></svg>
    <i class="thumb"></i>
    <svg viewBox="0 0 8 5"><path d="M0 0l4 5 4-5z" fill="#505050"/></svg>
  </div>
</div>

<footer class="taskbar">
  <div class="start"><svg viewBox="0 0 16 16" fill="#fff"><path d="M0 2.200l6.500-.9v6.300H0zM7.300 1.200L16 0v7.600H7.300zM0 8.400h6.500v6.300L0 13.800zM7.300 8.400H16V16l-8.700-1.200z"/></svg></div>
  <div class="search"><svg viewBox="0 0 16 16"><circle cx="10.300" cy="5.700" r="4.800" fill="none" stroke="#222" stroke-width="1.200"/><path d="M6.800 9.200L.5 15.500" stroke="#222" stroke-width="1.300"/></svg><span>Type here to search</span></div>
  <div class="apps">
    <div><svg viewBox="0 0 24 24"><circle cx="12" cy="12" r="6.800" fill="none" stroke="#fff" stroke-width="2"/></svg></div>
    <div><svg viewBox="0 0 24 24" fill="none" stroke="#fff" stroke-width="1.200"><path d="M3 8.500h10v7H3zM3 4v2.500h10V4M3 20v-2.500h10V20M17 4v16"/><path d="M17 9.500v3" stroke-width="3"/></svg></div>
    <div class="run"><svg viewBox="0 0 24 24"><path d="M2 11Q4 1.500 12.500 1.500q9.500 0 9.500 11.500H9q.5 5 6 5 3.500 0 6-1.700v4.500Q18.500 22.500 14 22.500q-8.500 0-9.500-8.500-.3-4 4-7Q4.500 7.500 2 11zM9 9.500h7.500Q16.500 6 13 6T9 9.500z" fill="#0a7bd8"/></svg></div>
    <div class="run"><svg viewBox="0 0 24 24"><path d="M1 3h7l1.500 2H23v15H1z" fill="#f0b93e"/><path d="M1 7h22v13H1z" fill="#fbdc7c"/><path d="M5 12h14v9h-4v-5H9v5H5z" fill="#3e92d9"/></svg></div>
    <div><svg viewBox="0 0 24 24"><path d="M8 7V4.500q0-3 4-3t4 3V7" fill="none" stroke="#fff" stroke-width="1.300"/><path d="M1 7h22v16H1z" fill="#fff"/><path d="M6.500 10h5v4.500h-5z" fill="#f25022"/><path d="M12.500 10h5v4.500h-5z" fill="#7fba00"/><path d="M6.500 15.500h5V20h-5z" fill="#00a4ef"/><path d="M12.500 15.500h5V20h-5z" fill="#ffb900"/></svg></div>
    <div><svg viewBox="0 0 24 24"><path d="M0 9l12-7 12 7v13H0z" fill="#0d5cab"/><path d="M3 9h18l-2 5-5 4z" fill="#e9eef2"/><path d="M0 9l14 13H0z" fill="#1f8fe6"/><path d="M24 9v13H8z" fill="#35acf5"/></svg></div>
    <div class="run current"><svg viewBox="0 0 24 24"><circle cx="12" cy="12" r="11" fill="#ea4335"/><path d="M2.500 6.500L9 17.500 12 23A11 11 0 0 1 2.500 6.500z" fill="#34a853"/><path d="M12 6.800h9.700A11 11 0 0 1 12 23l4.600-8z" fill="#fbc116"/><circle cx="12" cy="12" r="5.200" fill="#fff"/><circle cx="12" cy="12" r="4.200" fill="#4688f1"/></svg></div>
    <div class="run"><svg viewBox="0 0 24 24"><path d="M0 1h24v7H0z" fill="#ad2f3d"/><path d="M0 8.500h24v7H0z" fill="#5d4ca6"/><path d="M0 16h24v7H0z" fill="#3a8e42"/><path d="M9 0h6v24H9z" fill="#c47a22"/><path d="M3 1v22M20 1v22" stroke="#e0c45a" stroke-width="1.500"/><path d="M8.500 8h7v7h-7z" fill="#f2df9c"/><path d="M10.500 10h3v3h-3z" fill="#7a3d12"/></svg></div>
    <div class="run"><svg viewBox="0 0 24 24"><ellipse cx="12" cy="12" rx="11" ry="11.500" fill="#e2131f"/><ellipse cx="12" cy="12" rx="4.800" ry="8.200" fill="#20323d"/></svg></div>
    <div class="run"><svg viewBox="0 0 24 24"><path d="M6 1h18v22H6z" fill="#2b7cd3"/><path d="M6 1h18v6H6z" fill="#41a5ee"/><path d="M6 17h18v6H6z" fill="#103f91"/><path d="M0 6h13v13H0z" fill="#1b54ae"/><text x="6.500" y="16" font-size="10" font-weight="700" text-anchor="middle" fill="#fff" font-family="Open Sans, sans-serif">W</text></svg></div>
    <div class="run"><svg viewBox="0 0 24 24"><path d="M17 0l6 2.500v19L17 24 7 14l-4.500 3.500L.5 16 4.500 12 .5 8l2-1.500L7 10zM17 7l-6 5 6 5z" fill="#1f9cf0"/><path d="M17 0l6 2.500v19L17 24z" fill="#3cb0fa"/></svg></div>
    <div class="run"><svg viewBox="0 0 24 24"><circle cx="12" cy="12" r="12" fill="#fff"/><path d="M12 2q5 5 4.500 10.500T12 20q-4-2.500-4.500-7.500T12 2z" fill="#14a14f"/><path d="M12 5v17" stroke="#0b7d3a"/></svg></div>
    <div class="run"><svg viewBox="0 0 24 24"><ellipse cx="12" cy="9" rx="10.500" ry="7" transform="rotate(-25 12 9)" fill="#e8e8ea" stroke="#c8323a" stroke-width="1.600"/><path d="M9 17L21 8M17 12l-1 8" stroke="#9da4ac" stroke-width="1.600"/><circle cx="14" cy="20.500" r="2.300" fill="none" stroke="#3b8ad8" stroke-width="1.500"/><circle cx="20" cy="17" r="2.300" fill="none" stroke="#3b8ad8" stroke-width="1.500"/></svg></div>
    <div class="run"><svg viewBox="0 0 24 24"><circle cx="12" cy="11" r="10" fill="#93b84b"/><path d="M12 10L7.500 22M12 10l4.500 12M9.500 18q2.500 1.500 5 0" fill="none" stroke="#e6e9e3" stroke-width="2"/><circle cx="12" cy="10" r="2.300" fill="#e6e9e3"/></svg></div>
    <div class="run"><svg viewBox="0 0 24 24"><path d="M1 2h22v20H1z" fill="#22b573"/><path d="M1 2h22v5H1z" fill="#59d79a"/><path d="M6 6h12v16H6z" fill="#f5f7fa"/><path d="M8.500 9h7v13h-7z" fill="#22586b"/></svg></div>
    <div class="run"><svg viewBox="0 0 16 16"><g id="idm"><path d="M1 6q-1 6 5 8 3 1 5-1L8 8z" fill="#e0362c"/><path d="M1 7q1 5 6 6l3-1-6-7z" fill="#f6d41c"/><circle cx="9.500" cy="5.500" r="5" fill="#3b78c8"/><path d="M7 2q4-2 5 1l-2 2-3 1z" fill="#b9d9ee"/><path d="M6 7l5 1 1-3 4 3-5 8z" fill="#2f9e2c"/></g></svg></div>
  </div>
  <div class="tray">
    <svg viewBox="0 0 16 16"><path d="M2 11l6-6 6 6" fill="none" stroke="#fff" stroke-width="1.400"/></svg>
    <svg viewBox="0 0 16 16"><path d="M1 1h14v14H1z" fill="#3c0a0c"/><path d="M3 3q4-2 7 0l3 5-3 5H3z" fill="#c3121b"/><path d="M9 9l4 1-3 2z" fill="#e35"/></svg>
    <svg viewBox="0 0 16 16"><circle cx="8" cy="8" r="7.800" fill="#55b9ee"/><circle cx="7.500" cy="7" r="4.200" fill="#35406f"/><circle cx="9.500" cy="5.500" r="2" fill="#c9dcf2"/></svg>
    <svg viewBox="0 0 16 16" fill="none" stroke="#fff" stroke-width="1.200"><path d="M5.500 4.500h9v7h-11V9"/><path d="M6 6h7.500v4H6z" fill="#fff"/><path d="M1 2v2h3V2M2.500 4v5M.5 4.500h4"/></svg>
    <svg viewBox="0 0 16 16" fill="none" stroke="#fff" stroke-width="1.100"><path d="M2 14.500A13 13 0 0 1 14.500 3M5.500 14.500a9 9 0 0 1 9-8M9 14.500a5.500 5.500 0 0 1 5.500-4.500"/><circle cx="13.500" cy="13.500" r="1.300" fill="#fff" stroke="none"/></svg>
    <svg viewBox="0 0 16 16" fill="none" stroke="#fff" stroke-width="1.200"><path d="M.8 6h2.500L7 2.500v11L3.300 10H.8zM9 6q1.500 2 0 4M11 4.200q3 3.800 0 7.600M13 2.500q4.500 5.500 0 11"/></svg>
    <div class="clock"><span>7:09 PM</span><span>4/27/2020</span></div>
    <svg class="notify" viewBox="0 0 16 16"><path d="M.7 1.700h14.600v10.600h-5L8 14.800 5.700 12.300h-5z" fill="none" stroke="#fff" stroke-width="1.100"/></svg>
    <i class="desktop"></i>
  </div>
</footer>

<svg width="0" height="0" class="defs"><defs>
  <g id="ebook"><text x="8" y="15" font-size="20" text-anchor="middle" fill="#f58220" font-family="Liberation Serif, serif">E</text></g>
  <g id="sbook" fill="none" stroke="#34496b" stroke-width="1.700"><path d="M13 3.500Q9 .2 5 2q-3 2 1 3.700l4.500 1.600q4 2-.5 6.200"/><path d="M3 12.500q3.500 3 8 1.500M3 9.500Q4 8 6.500 8.800M13 5.500Q12.500 7 10.500 7" stroke-width="1.300"/></g>
</defs></svg>
</body>
</html>
```
FILE: styles.css
```css
* { box-sizing: border-box; }
body {
  margin: 0; width: 1920px; height: 1080px; overflow: hidden;
  display: flex; flex-direction: column; background: #fff;
  font-family: "Liberation Sans", Arial, sans-serif; font-size: 13px; letter-spacing: -.21px; line-height: 17px; color: #333;
}
svg { display: block; flex: none; }
h2, h3, ul { margin: 0; padding: 0; }
.defs { position: absolute; }
.i16 { width: 16px; height: 16px; }
.i18 { width: 17px; height: 17px; }

.tabstrip, .toolbar, .bookmarks, .taskbar { font-family: "Open Sans", "Noto Sans", sans-serif; }

/* browser frame */
.tabstrip { height: 34px; flex: none; background: #dee1e6; display: flex; padding-left: 8px; }
.tab { width: 240px; background: #fff; border-radius: 8px 8px 0 0; display: flex; align-items: center; padding: 0 11px 0 12px; position: relative; }
.tab::before, .tab::after { content: ""; position: absolute; bottom: 0; width: 8px; height: 8px; }
.tab::before { left: -8px; background: radial-gradient(circle at 0 0, #dee1e6 8px, #fff 8.500px); }
.tab::after { right: -8px; background: radial-gradient(circle at 100% 0, #dee1e6 8px, #fff 8.500px); }
.tab-title { margin-left: 8px; flex: 1; font-size: 12px; letter-spacing: -.35px; color: #3c4043; }
.tab-close { width: 10px; height: 10px; }
.newtab { width: 13px; height: 13px; margin: 11px 0 0 15px; }
.winbtns { margin: 8px 17px 0 auto; display: flex; gap: 34px; }
.winbtns svg { width: 12px; height: 12px; }

.toolbar { height: 35px; flex: none; display: flex; align-items: center; padding-left: 12px; padding-top: 1px; }
.nav { width: 20px; height: 20px; margin-right: 12px; }
.omnibox { width: 1562px; height: 28px; border-radius: 14px; background: #f1f3f4; display: flex; align-items: center; padding: 0 8px 0 9px; }
.url { margin-left: 8px; flex: 1; font-size: 13.500px; letter-spacing: -.23px; color: #202124; }
.dim { color: #6a6e73; }
.star { margin-left: 15px; }
.extensions { display: flex; gap: 16px; margin-left: 15px; }
.sep { width: 1px; height: 16px; background: #c4c7cb; margin: 0 11px 0 14px; }
.avatar { width: 22px; height: 22px; }
.dots { width: 4px; height: 16px; margin-left: 19px; fill: #5f6368; }

.bookmarks { height: 34px; flex: none; border-bottom: 1px solid #c6c6c8; display: flex; align-items: center; padding: 0 18px 3px 13px; }
.bookmarks a { width: 154px; display: flex; align-items: center; gap: 8px; font-size: 12px; letter-spacing: -.35px; color: #3c4043; white-space: nowrap; }
.bookmarks a:nth-child(1), .bookmarks a:nth-child(9) { width: 68px; }
.bookmarks a:nth-child(7) { width: 126px; }
.bookmarks a:nth-child(10) { width: 71px; }
.more { width: 10px; height: 8px; margin-left: auto; }

.viewport { flex: 1; min-height: 0; display: flex; }
.page { width: 1903px; display: flex; flex-direction: column; }
.scrollbar { width: 17px; background: #f1f1f1; display: flex; flex-direction: column; align-items: center; padding: 7px 0; }
.scrollbar svg { width: 8px; height: 5px; }
.thumb { width: 13px; height: 832px; margin: 68px 0 auto; background: #c1c1c1; }

/* application */
.navbar { height: 46px; flex: none; background: #222; border-bottom: 1px solid #090909; display: flex; justify-content: space-between; padding: 0 19px 0 13px; color: #9d9d9d; }
.welcome { font-size: 16.300px; line-height: 47px; letter-spacing: -.05px; }
.account { display: flex; align-items: center; height: 43px; letter-spacing: -.12px; }
.account svg { width: 14px; height: 14px; margin-right: 4px; }
.caret { border: 4px solid transparent; border-top-color: #9d9d9d; border-bottom: 0; margin-left: 6px; border-left-width: 3.500px; border-right-width: 3.500px; }

.columns { flex: 1; min-height: 0; display: flex; }
.sidebar { width: 226px; background: #f8f8f8; border-right: 1px solid #e7e7e7; display: flex; flex-direction: column; color: #337ab7; padding-bottom: 10px; }
.brand { height: 64px; flex: none; border-bottom: 1px solid #e7e7e7; display: flex; padding: 15px 0 0 15px; font-weight: 700; }
.brand svg { width: 32px; height: 32px; margin-right: 6px; }
.brand span { align-self: flex-start; margin-top: 7px; height: 14px; line-height: 14px; background: #eee; }
.item { height: 35.850px; flex: none; border-bottom: 1px solid #e7e7e7; display: flex; align-items: center; padding: 0 12px 0 15px; }
.item span { flex: 1; padding-bottom: 2px; }
.item .fa { width: 13.500px; height: 13.500px; margin-right: 5px; }
.item-add .fa { margin-right: 4px; }
.item-donors, .item-camps { padding-left: 13px; }
.item-donors .fa { margin-right: 3px; }
.item-camps .fa { margin-right: 2.500px; }
.item-camps { border-bottom: 0; padding-bottom: 1px; }
.arrow { width: 7px; height: 9px; margin-top: -5px; }
.arrow.down { width: 10px; height: 8px; }
.sub { height: 35px; flex: none; padding-left: 33px; line-height: 31px; }
.active { background: #eee; border-bottom: 1px solid #e9e9e9; }
.softgen { width: 170px; height: 220px; margin: auto 0 0 50px; overflow: visible; }
.softgen-name { font: 96px "DejaVu Sans Mono", monospace; letter-spacing: 0; fill: #000; stroke: #f8f8f8; stroke-width: 1px; }

.main { flex: 1; padding: 7px 27px 0; }
.panel { height: 874px; border: 1px solid #ddd; border-radius: 4px; box-shadow: 0 1px 1px rgba(0,0,0,.05); }
.panel-heading { height: 36px; background: #f5f5f5; border-bottom: 1px solid #ddd; text-align: center; font-size: 13px; line-height: 34px; }
.alert { margin-top: 13px; height: 165px; background: #f2dede; border: 1px solid #ebccd1; border-radius: 4px; color: #a94442; padding: 13px 0 0 50px; }
.alert li { line-height: 17.070px; }
.alert ul { list-style: none; }
.alert li::before { content: ""; float: left; width: 4px; height: 4px; border-radius: 50%; background: currentColor; margin: 8px 0 0 -15px; }
.alert .hot { color: #ff1744; font-weight: 700; }
.panel-body { display: flex; gap: 27px; padding: 0 28px; }
.form { width: 769px; padding-top: 33px; display: flex; flex-direction: column; color: #a94442; }
.form label { font-weight: 700; height: 22.100px; line-height: 16px; }
.control { flex: none; width: 769px; height: 30.400px; margin: 0 0 13px; border: 1px solid #ccc; border-radius: 4px; background: #fff; padding: 0 11px 1px 10.500px; font: 13px "Liberation Sans", Arial, sans-serif; letter-spacing: -.22px; color: #555; box-shadow: inset 0 1px 1px rgba(0,0,0,.075); outline: 0; }
.date { letter-spacing: .05px; }
.control[readonly] { background: #eee; }
.control::placeholder { color: #999; }
textarea.control { height: 97.500px; margin-bottom: 14px; }
.file { display: flex; align-items: center; gap: 3px; padding: 0 10px; line-height: 16px; }
.choose { height: 19px; width: 82px; margin-top: 2px; border: 1px solid #a9a9a9; background: linear-gradient(#f8f8f8, #ddd); color: #000; text-align: center; }
.submit { align-self: flex-end; width: 105px; height: 29px; border: 1px solid #4cae4c; border-radius: 4px; background: #5cb85c; color: #fff; font: 13px "Liberation Sans", Arial, sans-serif; letter-spacing: -.18px; padding: 0 0 1px; }

.location { width: 769px; color: #a94442; }
.location h3 { height: 36px; font-size: 21.600px; letter-spacing: 0; line-height: 32px; text-align: center; }
.map { position: relative; width: 769px; height: 609px; overflow: hidden; font-family: Roboto, sans-serif; letter-spacing: 0; }
.tiles { width: 769px; height: 609px; }
.road { stroke: #fbdb7a; stroke-width: 9px; }
.mway { stroke: #f9d06a; stroke-width: 11px; }
.town { font-size: 31px; fill: #5b5d60; stroke: #fff; stroke-width: 6px; stroke-opacity: .85; paint-order: stroke; stroke-linejoin: round; }
.city { font-size: 36px; fill: #424447; }
.capital { font-size: 38px; font-weight: 500; }
.park { font-size: 38px; fill: #188046; stroke: #e4f5e4; }
.shield { font-size: 25px; font-weight: 700; fill: #fff; text-anchor: middle; }
.maptype { position: absolute; left: 9px; top: 9px; height: 36px; display: flex; background: #fff; border-radius: 2px; box-shadow: 0 1px 4px -1px rgba(0,0,0,.35); font-size: 16px; line-height: 35px; text-align: center; color: #565656; }
.maptype b { width: 63px; font-weight: 500; color: #000; border-right: 1px solid #e8e8e8; }
.maptype span { width: 89px; }
.mapbtn, .zoom { position: absolute; right: 9px; width: 36px; background: #fff; border-radius: 2px; box-shadow: 0 1px 4px -1px rgba(0,0,0,.3); display: flex; align-items: center; }
.mapbtn { height: 36px; justify-content: center; }
.fullscreen { top: 9px; }
.fullscreen svg, .zoom svg { width: 16px; height: 16px; }
.pegman { top: 449px; }
.pegman svg { width: 16px; height: 27px; }
.zoom { top: 514px; height: 73px; flex-direction: column; padding-top: 10px; }
.zoom i { width: 27px; height: 1px; margin: 10px 0; background: #e0e0e0; }
.glogo { position: absolute; left: 4px; bottom: 1px; width: 60px; height: 22px; font-size: 18px; font-weight: 500; stroke: #fff; stroke-width: 2px; paint-order: stroke; }
.credits { position: absolute; right: 0; bottom: 0; height: 13px; display: flex; font-size: 9px; line-height: 12px; color: #444; }
.credits span { background: rgba(245,245,245,.7); padding: 0 5px; margin-left: 1px; white-space: nowrap; }

/* desktop */
.taskbar { height: 40px; flex: none; display: flex; background: linear-gradient(90deg, #21363f 0, #21363f 52%, #20303d 57%, #444 62%, #444); color: #fff; }
.start { width: 48px; display: flex; align-items: center; justify-content: center; }
.start svg { width: 16px; height: 16px; }
.search { width: 344px; background: #f2f2f2; border: 1px solid #bbb; color: #3a3a3a; display: flex; align-items: center; font-size: 14.500px; letter-spacing: -.15px; padding: 0 0 0 11px; }
.search svg { width: 17px; height: 17px; margin-right: 11px; }
.apps { display: flex; }
.apps div { width: 49px; height: 40px; display: flex; align-items: center; justify-content: center; border: solid transparent; border-width: 0 4px; }
.apps svg { width: 24px; height: 24px; }
.apps .run { background: linear-gradient(#76b9ed, #76b9ed) bottom / 100% 2px no-repeat padding-box; }
.apps .current { border-width: 0 1px; background: linear-gradient(#76b9ed, #76b9ed) bottom / 100% 2px no-repeat padding-box, #52636b; }
.tray { margin-left: auto; display: flex; align-items: center; }
.tray svg { width: 16px; height: 16px; margin-right: 8px; }
.clock { width: 64px; margin-left: -4px; display: flex; flex-direction: column; text-align: center; font-size: 11.500px; letter-spacing: -.3px; line-height: 18px; }
.tray .notify { margin: 0 20px 0 12px; }
.desktop { width: 1px; height: 40px; background: #777; margin-right: 4px; }
```
